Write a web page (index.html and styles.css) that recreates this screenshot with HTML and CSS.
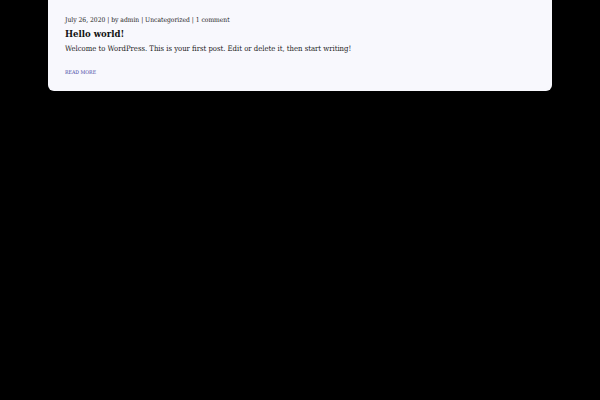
FILE: index.html
```html
<!DOCTYPE html>
<html>
<head>
<meta charset="utf-8">
<link rel="stylesheet" href="styles.css">
</head>
<body>
<article class="card">
  <div class="meta">July 26, 2020 | by admin | Uncategorized | 1 comment</div>
  <h2 class="title">Hello world!</h2>
  <p class="excerpt">Welcome to WordPress. This is your first post. Edit or delete it, then start writing!</p>
  <a class="more" href="#">Read more</a>
</article>
</body>
</html>
```
FILE: styles.css
```css
html, body {
  margin: 0;
  background: #000;
}
body {
  font-family: "DejaVu Serif Condensed", "DejaVu Serif", serif;
  font-stretch: condensed;
  color: #222;
}
.card {
  margin: 0 48px;
  background: #f8f8fd;
  border-radius: 0 0 6px 6px;
  padding: 15px 17px 13px;
}
.meta {
  font-size: 6.7px;
  line-height: 10px;
  color: #1a1a1a;
}
.title {
  margin: 3px 0 0;
  font-size: 9.5px;
  line-height: 12px;
  font-weight: bold;
  color: #111;
}
.excerpt {
  margin: 3px 0 0;
  font-size: 7.65px;
  line-height: 11px;
  color: #222;
}
.more {
  display: inline-block;
  margin-top: 15px;
  font-size: 5.2px;
  line-height: 7px;
  text-transform: uppercase;
  color: #3a3aa0;
  text-decoration: none;
}
```
